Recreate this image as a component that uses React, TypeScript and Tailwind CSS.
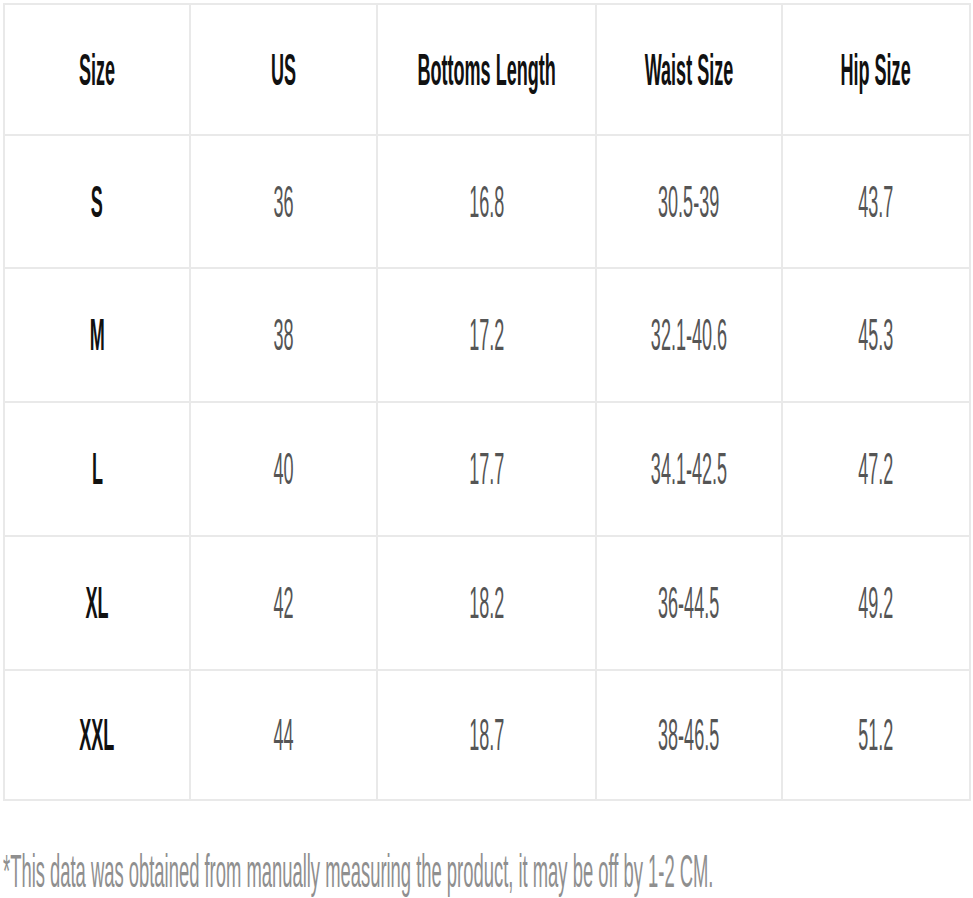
import React from "react";

// size chart rows: [size, us, bottoms length, waist, hip]
const headers = ["Size", "US", "Bottoms Length", "Waist Size", "Hip Size"];

const rows: string[][] = [
  ["S", "36", "16.8", "30.5-39", "43.7"],
  ["M", "38", "17.2", "32.1-40.6", "45.3"],
  ["L", "40", "17.7", "34.1-42.5", "47.2"],
  ["XL", "42", "18.2", "36-44.5", "49.2"],
  ["XXL", "44", "18.7", "38-46.5", "51.2"],
];

const font = { fontFamily: '"Liberation Sans", Arial, sans-serif' };

function Cell({ text, bold }: { text: string; bold?: boolean }) {
  return (
    <div className="bg-white flex items-center justify-center overflow-hidden">
      <span
        className={`inline-block whitespace-nowrap text-[44px] leading-none scale-x-[0.41] ${
          bold ? "font-bold text-[#111111]" : "font-normal text-[#555555]"
        }`}
        style={font}
      >
        {text}
      </span>
    </div>
  );
}

export default function App() {
  return (
    <div className="w-[973px] h-[898px] bg-white overflow-hidden">
      <div className="ml-[3px] mt-[3px] w-[968px] p-[2px] gap-[2px] bg-[#e9e9e9] grid grid-cols-[184px_185px_217px_184px_186px] grid-rows-[129px_131px_132px_132px_132px_128px]">
        {headers.map((h) => (
          <Cell key={h} text={h} bold />
        ))}
        {rows.map((r) =>
          r.map((v, i) => <Cell key={r[0] + i} text={v} bold={i === 0} />)
        )}
      </div>
      <div className="mt-[47px] ml-[3px] h-[46px] whitespace-nowrap">
        <span
          className="inline-block origin-left scale-x-[0.4] text-[46px] leading-none text-[#8f8f8f]"
          style={font}
        >
          *This data was obtained from manually measuring the product, it may be off by 1-2 CM.
        </span>
      </div>
    </div>
  );
}
